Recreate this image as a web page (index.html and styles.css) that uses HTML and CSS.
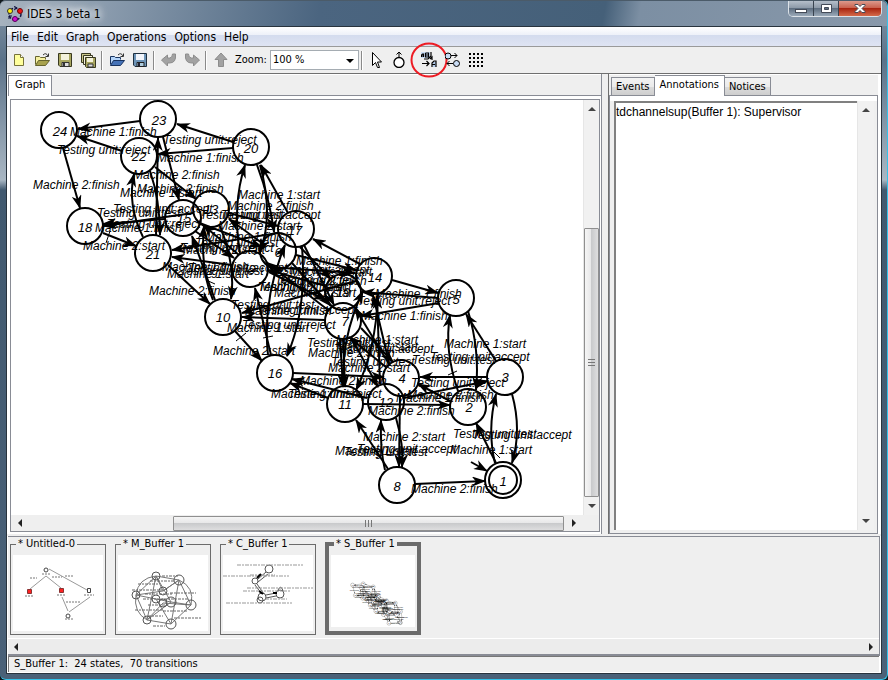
FILE: index.html
```
<!DOCTYPE html>
<html lang="en">
<head>
<meta charset="utf-8">
<title>IDES 3 beta 1</title>
<link rel="stylesheet" href="styles.css">
</head>
<body>
<div class="window">
  <header class="titlebar">
    <svg class="app-icon" viewBox="0 0 16 16" aria-hidden="true"><circle cx="8" cy="8" r="6" fill="none" stroke="#101040" stroke-width="1.5" stroke-dasharray="3 1.5"/><path d="M7 0l3 2-3 2M2 13v-3h3" fill="none" stroke="#101040"/><circle cx="3" cy="5" r="2.500" fill="#ffee10" stroke="#333"/><circle cx="13" cy="5" r="2.500" fill="#f01010" stroke="#600"/><circle cx="8" cy="13" r="2.500" fill="#d010d0" stroke="#505"/></svg>
    <h1 class="title">IDES 3 beta 1</h1>
    <div class="controls">
      <button class="ctl" aria-label="Minimize"><svg viewBox="0 0 14 12"><rect x="1.500" y="6.500" width="11" height="3" fill="#fff" stroke="#444b58"/></svg></button>
      <button class="ctl" aria-label="Maximize"><svg viewBox="0 0 14 12"><path d="M2.500 1.500h10v8h-10zM5.500 4.500h4v2h-4z" fill="#fff" fill-rule="evenodd" stroke="#444b58"/></svg></button>
      <button class="ctl close" aria-label="Close"><svg viewBox="0 0 14 12"><path d="M2 1.500h3l2 2 2-2h3v1l-3 3 3 3v1H9l-2-2-2 2H2v-1l3-3-3-3z" fill="#fff" stroke="#444b58"/></svg></button>
    </div>
  </header>

  <div class="client">
    <nav class="menubar">
      <button>File</button><button>Edit</button><button>Graph</button><button>Operations</button><button>Options</button><button>Help</button>
    </nav>

    <div class="toolbar">
      <button class="tool" aria-label="New"><svg viewBox="0 0 16 16"><path d="M3.500 2.500h6l3 3v8h-9z" fill="#ffff9c" stroke="#77723a"/><path d="M9.500 2.500v3h3" fill="#fff" stroke="#77723a"/></svg></button>
      <button class="tool" aria-label="Open"><svg viewBox="0 0 16 16"><path d="M1.500 12.500v-8h4l1 1h5v2" fill="#f6f0a0" stroke="#66642e"/><path d="M1.500 13.500l3-5h11l-4 5z" fill="#a8a24e" stroke="#66642e"/><path d="M9 3q3-3 5 1M14.500 1.500v3h-3" fill="none" stroke="#333"/></svg></button>
      <button class="tool" aria-label="Save"><svg viewBox="0 0 16 16"><path d="M1.500 1.500h13v13H3l-1.500-1.500z" fill="#a8a660" stroke="#383820"/><path d="M4 2h8v6H4z" fill="#f4f2dc"/><path d="M5 10.500h7v4H5z" fill="#ddd" stroke="#333"/><path d="M6 11h2v3H6z" fill="#333"/></svg></button>
      <button class="tool" aria-label="Save all"><svg viewBox="0 0 16 16"><path d="M1.500 1.500h9v9h-9z" fill="#c9c68a" stroke="#383820"/><path d="M3.500 3.500h9v9h-9z" fill="#f4f2dc" stroke="#383820"/><path d="M5.500 5.500h10v10h-9l-1-1z" fill="#a8a660" stroke="#383820"/><path d="M7 6h6v4H7z" fill="#f4f2dc"/><path d="M8 12h5v3H8z" fill="#ddd" stroke="#333"/></svg></button>
      <span class="sep"></span>
      <button class="tool" aria-label="Open workspace"><svg viewBox="0 0 16 16"><path d="M1.500 12.500v-8h4l1 1h5v2" fill="#b3d4fa" stroke="#19335f"/><path d="M1.500 13.500l3-5h11l-4 5z" fill="#4673b8" stroke="#19335f"/><path d="M9 3q3-3 5 1M14.500 1.500v3h-3" fill="none" stroke="#333"/></svg></button>
      <button class="tool" aria-label="Save workspace"><svg viewBox="0 0 16 16"><path d="M1.500 1.500h13v13H3l-1.500-1.500z" fill="#6d94b8" stroke="#20303f"/><path d="M4 2h8v6H4z" fill="#f2f5fb"/><path d="M5 10.500h7v4H5z" fill="#aecde0" stroke="#222"/><path d="M6 11h2v3H6z" fill="#223"/></svg></button>
      <span class="sep"></span>
      <button class="tool" aria-label="Undo"><svg viewBox="0 0 16 16"><path d="M0.500 8l6-5v3h2q3 0 3-4h3q1 9-6 9h-2v3z" fill="#a2a2a2" stroke="#8d8d8d"/></svg></button>
      <button class="tool" aria-label="Redo"><svg viewBox="0 0 16 16"><path d="M15.500 8l-6-5v3h-2q-3 0-3-4h-3q-1 9 6 9h2v3z" fill="#a2a2a2" stroke="#8d8d8d"/></svg></button>
      <span class="sep"></span>
      <button class="tool" aria-label="Up"><svg viewBox="0 0 16 16"><path d="M8 1l6 6.500h-3.500V14.500h-5V7.500H2z" fill="#a2a2a2" stroke="#8d8d8d"/></svg></button>
      <label class="zoom-label" for="zoom">Zoom:</label>
      <span class="select-box"><select id="zoom"><option>100 %</option><option>50 %</option></select></span>
      <span class="sep"></span>
      <button class="tool" aria-label="Select"><svg viewBox="0 0 16 16"><path d="M4.500 0.500v13l3-3 2 5h2l-2-5.500h4z" fill="#fff" stroke="#000"/></svg></button>
      <button class="tool" aria-label="Create state"><svg viewBox="0 0 16 16"><circle cx="8" cy="10.500" r="5" fill="#fff" stroke="#000" stroke-width="1.300"/><path d="M8 5V0M5.500 2.500L8 0l2.500 2.500" fill="none" stroke="#000"/></svg></button>
      <button class="tool marked" aria-label="Label layout"><svg viewBox="0 0 16 16"><path d="M0 0h9v6H0z" fill="#c9dcf5"/><path d="M0.500 5V3l1-1h1v3M0 4h3M4.500 1v4h3V1h-3M4.500 3h3M10 0v4l-3 3H3M9 7l2-2v3" fill="none" stroke="#000" stroke-width="1.200"/><path d="M12 10h3v5h-3z" fill="#b4cdec"/><path d="M1 11.500h7M5.500 9l2.500 2.500L5.500 14M11 15v-4l2-2h2v6M11 12.500h3" fill="none" stroke="#000" stroke-width="1.200"/></svg><svg class="ring" viewBox="0 0 38 36"><ellipse cx="19" cy="18" rx="17.500" ry="16.500" fill="none" stroke="#ed1c24" stroke-width="2"/></svg></button>
      <button class="tool" aria-label="Transitions"><svg viewBox="0 0 16 16"><circle cx="3" cy="4" r="3" fill="#c9dcf5" stroke="#000"/><circle cx="11.500" cy="11.500" r="3" fill="#c9dcf5" stroke="#000"/><path d="M6 3.500h6M9.500 1L12 3.500 9.500 6M8 11.500H2M4.500 9L2 11.500 4.500 14" fill="none" stroke="#000"/></svg></button>
      <button class="tool" aria-label="Grid"><svg viewBox="0 0 16 16"><path d="M1 2h15M1 6h15M1 10h15M1 14h15" stroke="#000" stroke-width="2" stroke-dasharray="2 2"/></svg></button>
    </div>

    <main class="work">
      <section class="graph-pane">
        <div class="tabs"><button class="tab on">Graph</button></div>
        <div class="graph-frame">
          <div class="canvas">
            <svg width="574" height="414" viewBox="11 100 574 414">
              <defs>
                <marker id="arrow" viewBox="0 0 14 10" refX="13" refY="5" markerWidth="14" markerHeight="10" markerUnits="userSpaceOnUse" orient="auto"><path d="M0 0L14 5 0 10 4 5z"/></marker>
              </defs>
              <g id="automaton">
                <g class="edges">
                  <path d="M140 121L78 129"/><path d="M122 151L77 136"/><path d="M63 148L80 208"/><path d="M233 142L177 124"/><path d="M233 148L158 154"/>
                  <path d="M155 167L196 199"/><path d="M163 137L179 200"/><path d="M143 237Q127 205 134 174"/><path d="M156 235L158 138"/><path d="M150 171Q160 200 160 235"/>
                  <path d="M103 233L136 246"/><path d="M165 219L103 224"/><path d="M193 213L103 226"/><path d="M278 233L172 250"/><path d="M232 265L172 257"/>
                  <path d="M168 265L210 304"/><path d="M215 300L192 236"/><path d="M213 300Q200 270 204 226"/><path d="M220 226Q236 265 231 299"/>
                  <path d="M240 253Q232 205 245 165"/><path d="M257 165Q270 200 274 232"/><path d="M260 165Q274 215 260 252"/><path d="M288 213L261 165"/>
                  <path d="M229 213L278 226"/><path d="M197 222L262 247"/><path d="M262 243L229 219"/><path d="M195 231L234 258"/><path d="M239 255L203 225"/>
                  <path d="M268 355Q262 300 285 245"/><path d="M271 355L255 288"/><path d="M302 247Q307 310 287 356"/><path d="M360 264L313 239"/>
                  <path d="M304 245L334 305"/><path d="M300 247L331 279"/><path d="M296 255L356 270"/><path d="M269 267L355 273"/><path d="M326 286L268 270"/>
                  <path d="M328 310L266 262"/><path d="M292 263L331 306"/><path d="M269 272L326 300"/><path d="M356 281L242 313"/><path d="M325 320L242 317"/>
                  <path d="M235 331L262 361"/><path d="M392 280L438 293"/><path d="M438 298L362 292"/><path d="M439 303L361 316"/>
                  <path d="M380 384L377 296"/><path d="M389 363L373 295"/><path d="M343 339L345 387"/><path d="M340 339L343 387"/><path d="M344 386Q340 340 363 291"/>
                  <path d="M361 328L393 362"/><path d="M389 364L355 308"/><path d="M387 368L349 337"/><path d="M351 337L378 387"/><path d="M378 294Q376 350 356 390"/>
                  <path d="M293 373L384 377"/><path d="M367 398L292 379"/><path d="M328 398L290 383"/><path d="M487 377L420 377"/><path d="M450 401L418 384"/>
                  <path d="M404 398L488 381"/><path d="M363 404L450 405"/><path d="M496 361L466 314"/><path d="M458 391Q444 350 450 315"/><path d="M468 311Q480 350 476 390"/>
                  <path d="M495 463Q487 430 496 394"/><path d="M512 394Q522 430 512 463"/><path d="M496 463L476 423"/><path d="M471 462L487 471"/>
                  <path d="M415 484L485 481"/><path d="M388 469L356 420"/><path d="M385 470Q380 450 381 420"/><path d="M396 418Q404 445 402 467"/><path d="M400 396L399 467"/>
                </g>
                <path class="ticks" d="M206 280l9 4M236 341l10-8M263 338l10-2M376 458l8-4M448 375l9-4M494 452l6 6M106 243l4-12"/>
                <g class="nodes">
                  <circle cx="59" cy="130" r="18"/><circle cx="158" cy="119" r="18"/><circle cx="139" cy="156" r="18"/><circle cx="251" cy="147" r="18"/><circle cx="85" cy="226" r="18"/><circle cx="153" cy="253" r="18"/><circle cx="183" cy="218" r="18"/><circle cx="211" cy="209" r="18"/><circle cx="296" cy="229" r="18"/><circle cx="278" cy="251" r="18"/><circle cx="250" cy="269" r="18"/><circle cx="223" cy="317" r="18"/><circle cx="275" cy="373" r="18"/><circle cx="374" cy="276" r="18"/><circle cx="343" cy="292" r="18"/><circle cx="343" cy="321" r="18"/><circle cx="456" cy="298" r="18"/><circle cx="401" cy="378" r="18"/><circle cx="386" cy="402" r="18"/><circle cx="345" cy="404" r="18"/><circle cx="468" cy="407" r="18"/><circle cx="505" cy="377" r="18"/><circle cx="397" cy="485" r="18"/><circle cx="503" cy="480" r="18"/><circle cx="503" cy="480" r="14"/>
                </g>
                <g class="names">
                  <text x="60" y="136">24</text><text x="159" y="125">23</text><text x="139" y="161">22</text><text x="251" y="153">20</text><text x="85" y="232">18</text><text x="153" y="259">21</text><text x="184" y="223">15</text><text x="211" y="214">13</text><text x="295" y="235">17</text><text x="278" y="257">6</text><text x="252" y="274">9</text><text x="223" y="322">10</text><text x="275" y="378">16</text><text x="375" y="282">14</text><text x="343" y="297">19</text><text x="345" y="326">7</text><text x="456" y="304">5</text><text x="402" y="383">4</text><text x="386" y="407">12</text><text x="345" y="409">11</text><text x="469" y="412">2</text><text x="505" y="382">3</text><text x="397" y="491">8</text><text x="503" y="486">1</text>
                </g>
                <g class="labels">
                  <text x="70" y="136">Machine 1:finish</text><text x="57" y="154">Testing unit:reject</text><text x="33" y="189">Machine 2:finish</text><text x="163" y="144">Testing unit:reject</text><text x="157" y="162">Machine 1:finish</text><text x="133" y="179">Machine 2:finish</text><text x="137" y="193">Machine 2:finish</text><text x="120" y="197">Machine 1:start</text><text x="113" y="213">Testing unit:accept</text><text x="97" y="217">Testing unit:test</text><text x="107" y="228">Testing unit:reject</text><text x="95" y="232">Machine 1:finish</text><text x="83" y="250">Machine 2:start</text>
                  <text x="238" y="199">Machine 1:start</text><text x="227" y="210">Machine 2:finish</text><text x="221" y="219">Testing unit:accept</text><text x="200" y="219">Testing unit:test</text><text x="218" y="230">Machine 2:start</text><text x="205" y="241">Machine 1:finish</text><text x="195" y="247">Testing unit:test</text><text x="180" y="252">Testing unit:reject</text><text x="183" y="254">Machine 2:start</text>
                  <text x="162" y="271">Machine 1:finish</text><text x="188" y="272">Testing unit:accept</text><text x="180" y="275">Testing unit:test</text><text x="167" y="278">Machine 1:start</text><text x="149" y="295">Machine 2:finish</text>
                  <text x="296" y="265">Machine 1:finish</text><text x="270" y="274">Testing unit:accept</text><text x="290" y="276">Machine 2:start</text><text x="275" y="284">Testing unit:test</text><text x="280" y="285">Machine 2:finish</text><text x="260" y="291">Machine 2:finish</text><text x="258" y="291">Testing unit:reject</text><text x="274" y="297">Machine 2:start</text>
                  <text x="231" y="309">Testing unit:test</text><text x="258" y="314">Testing unit:accept</text><text x="245" y="315">Machine 1:finish</text><text x="242" y="329">Testing unit:reject</text><text x="227" y="332">Machine 1:start</text><text x="213" y="355">Machine 2:start</text>
                  <text x="375" y="298">Machine 1:finish</text><text x="357" y="305">Testing unit:reject</text><text x="361" y="320">Machine 1:finish</text><text x="336" y="344">Machine 1:start</text><text x="307" y="347">Testing unit:test</text><text x="334" y="353">Testing unit:accept</text><text x="336" y="351">Machine 1:start</text><text x="308" y="357">Machine 2:finish</text><text x="331" y="366">Testing unit:test</text><text x="328" y="372">Machine 2:start</text><text x="300" y="385">Machine 2:finish</text><text x="271" y="398">Machine 1:finish</text><text x="288" y="398">Testing unit:reject</text>
                  <text x="444" y="348">Machine 1:start</text><text x="412" y="364">Testing unit:test</text><text x="430" y="361">Testing unit:accept</text><text x="411" y="387">Testing unit:reject</text><text x="407" y="399">Machine 2:finish</text><text x="396" y="402">Machine 1:finish</text><text x="368" y="415">Machine 2:finish</text><text x="363" y="441">Machine 2:start</text><text x="335" y="455">Machine 1:start</text><text x="357" y="453">Testing unit:accept</text><text x="344" y="456">Testing unit:test</text><text x="453" y="438">Testing unit:test</text><text x="472" y="439">Testing unit:accept</text><text x="450" y="454">Machine 1:start</text><text x="411" y="493">Machine 2:finish</text>
                </g>
              </g>
            </svg>
          </div>
          <div class="vscroll"><i class="arr up"></i><span class="vthumb"></span><i class="arr down"></i></div>
          <div class="hscroll"><i class="arr left"></i><span class="hthumb"></span><i class="arr right"></i></div>
        </div>
      </section>

      <section class="side-pane">
        <div class="tabs"><button class="tab">Events</button><button class="tab on">Annotations</button><button class="tab">Notices</button></div>
        <div class="note-frame">
          <textarea class="notes" aria-label="Annotations" spellcheck="false">tdchannelsup(Buffer 1): Supervisor</textarea>
          <div class="note-scroll"><i class="arr up"></i><i class="arr down"></i></div>
        </div>
      </section>
    </main>

    <section class="filmstrip">
      <div class="thumbs">
        <fieldset class="thumb"><legend>* Untitled-0</legend>
          <svg viewBox="0 0 90 76"><g fill="none" stroke="#999"><path d="M33 21L17 34M33 21L48 33M36 14L74 35M49 42L55 56M77 42L56 57"/><circle cx="33" cy="15" r="2" stroke="#444"/><circle cx="55" cy="61" r="2" stroke="#444"/><path d="M74.500 33.500h3v4h-3z" stroke="#444"/></g><path d="M14.500 34.500h4v4h-4zM46.500 33.500h4v4h-4z" fill="#f22" stroke="#833"/><path d="M17 23h7M39 22h10M52 21h9M29 19h8M12 41h9M44 40h9M71 40h10M53 47h14M52 64h8" stroke="#777" stroke-dasharray="2 1"/></svg>
        </fieldset>
        <fieldset class="thumb"><legend>* M_Buffer 1</legend>
          <svg viewBox="0 0 90 76"><g fill="none" stroke="#777"><path d="M38 21L61 25 73 50 53 69 29 65 18 40zM38 21L45 36 61 25M38 21L53 47 73 50M18 40L38 44 53 47 29 65M18 40L45 36 61 25 53 69M29 65L45 48 73 50M38 44L53 69M18 40Q20 23 38 21M73 50Q77 32 61 25M38 21L29 65M29 65Q15 57 18 40"/><g stroke="#555"><circle cx="38" cy="21" r="4"/><circle cx="61" cy="25" r="5"/><circle cx="73" cy="50" r="5"/><circle cx="53" cy="69" r="5"/><circle cx="29" cy="65" r="4"/><circle cx="18" cy="40" r="4"/><circle cx="45" cy="36" r="4"/><circle cx="38" cy="44" r="4"/><circle cx="53" cy="47" r="5"/><circle cx="45" cy="48" r="4"/></g></g><path d="M20 29h20M44 21h16M52 38h26M14 35h30M25 44h46M17 55h28M45 56h24M30 61h15M56 63h27M27 39h27M32 26h24M30 50h20M35 71h12" stroke="#666" stroke-dasharray="3 1 2 1"/></svg>
        </fieldset>
        <fieldset class="thumb"><legend>* C_Buffer 1</legend>
          <svg viewBox="0 0 90 76"><g fill="none" stroke="#555"><circle cx="46" cy="14" r="4"/><circle cx="32" cy="26" r="3"/><circle cx="39" cy="42" r="4"/><circle cx="57" cy="39" r="4"/><circle cx="37" cy="45" r="3"/><path d="M43 17L35 24M45 19L35 27M32 30L38 38M34 29L41 39M43 40L53 38M43 43L53 41M55 35q3-6 5 1"/></g><path d="M14 10h66M0 21h66M27 20h25M24 33h66M20 36h48M42 44h22M3 48h66" stroke="#999" stroke-dasharray="4 1 2 1"/><path d="M34 23l4-4M36 36l4 3M50 38h4" stroke="#000" stroke-width="2"/></svg>
        </fieldset>
        <fieldset class="thumb current"><legend>* S_Buffer 1</legend>
          <svg viewBox="0 0 780 655"><use href="#automaton" x="141" y="142"/></svg>
        </fieldset>
      </div>
      <div class="strip-scroll"><i class="arr left"></i><i class="arr right"></i></div>
    </section>

    <footer class="status">S_Buffer 1:&nbsp; 24 states,&nbsp; 70 transitions</footer>
  </div>
</div>
</body>
</html>
```
FILE: styles.css
```
* { box-sizing: border-box; }

body {
  margin: 0;
  background: #10181c;
  color: #000;
  font: 11px/14px "DejaVu Sans Condensed", "DejaVu Sans", sans-serif;
}

button, select, textarea { font: inherit; color: inherit; margin: 0; border: 0; padding: 0; background: none; }
svg { display: block; }

.window {
  display: flex;
  flex-direction: column;
  height: 100vh;
  padding: 0 5px 5px 6px;
  border: solid #33c3ea;
  border-width: 0 1px 1px 0;
  border-radius: 6px;
  background: linear-gradient(#8496a8, #5b7289 60px, #a9b7c3 180px, #41596f 190px, #4a6178);
}

.titlebar {
  display: flex;
  align-items: center;
  height: 26px;
  margin: 0 -5px 0 -6px;
  padding: 0 5px 0 7px;
  border-top: 1px solid #4b5b69;
  border-radius: 6px 6px 0 0;
  background: linear-gradient(100deg, #a7b3bf, #8a9bad 12%, #4b6580 36%, #456079 68%, #7c8fa3 72%, #8898aa);
}

.app-icon { width: 16px; height: 16px; }

.title {
  margin: 0 0 0 4px;
  font: 12px/16px "DejaVu Sans Condensed", "DejaVu Sans", sans-serif;
  text-shadow: 0 0 6px #fff, 0 0 8px #fff, 0 0 12px #fff;
}

.controls {
  display: flex;
  align-self: flex-start;
  margin-left: auto;
  height: 16px;
  border: 1px solid #dce2e8;
  border-top: 0;
  border-radius: 0 0 5px 5px;
  overflow: hidden;
}

.ctl {
  display: grid;
  place-items: center;
  width: 25px;
  border-right: 1px solid #39434f;
  background: linear-gradient(#b5bfca, #8996a5 50%, #5f6f81 50%, #9aa9b8);
}

.ctl svg { width: 14px; height: 12px; }

.ctl.close {
  width: 42px;
  border: 0;
  background: linear-gradient(#dc9a8c, #c75c48 50%, #a92510 50%, #d46a4a);
}

.client {
  flex: 1;
  min-height: 0;
  display: flex;
  flex-direction: column;
  border: 1px solid #28333d;
  background: #fff;
}

.menubar {
  display: flex;
  gap: 8px;
  height: 20px;
  padding: 0 4px;
  border-bottom: 1px solid #9a9a9a;
  background: linear-gradient(#fff, #eef1f9 40%, #d3dbee 40%, #dfe4f3);
  font-size: 12px;
}

.toolbar {
  display: flex;
  align-items: center;
  height: 27px;
  background: #efefef;
  border-bottom: 1px solid #6f6f6f;
}

.tool { position: relative; display: grid; place-items: center; width: 23px; height: 24px; }
.tool svg { width: 16px; height: 16px; }
.marked { margin: 0 1px 0 7px; }

.tool .ring {
  position: absolute;
  left: -8px;
  top: -6px;
  width: 38px;
  height: 36px;
}

.sep { width: 2px; height: 19px; margin: 0 2px; background: linear-gradient(90deg, #8a8a8a 50%, #fff 50%); }
.zoom-label { margin: 0 3px; }
.select-box { position: relative; width: 89px; height: 20px; }

.select-box select {
  width: 100%;
  height: 100%;
  padding: 0 2px;
  border: 1px solid #a5acb2;
  background: #fff;
  appearance: none;
}

.select-box::after {
  content: "";
  position: absolute;
  right: 5px;
  top: 9px;
  border: solid transparent;
  border-width: 4px 4px 0;
  border-top-color: #000;
  pointer-events: none;
}

.work { flex: 1; min-height: 0; display: flex; gap: 6px; padding-bottom: 2px; background: #efefef; }

.graph-pane, .side-pane { display: flex; flex-direction: column; padding-top: 1px; background: #fff; }
.graph-pane { flex: 1; min-width: 0; padding-left: 1px; border-right: 1px solid #898c95; }
.side-pane { width: 32%; max-width: 273px; padding-right: 3px; border-left: 1px solid #6f6f6f; }

.tabs {
  display: flex;
  align-items: flex-end;
  height: 21px;
  background: #efefef;
  border-bottom: 1px solid #898c95;
}

.side-pane .tabs { padding-left: 2px; }

.tab {
  height: 18px;
  padding: 0 4px;
  border: 1px solid #898c95;
  border-bottom: 0;
  background: linear-gradient(#f3f3f3, #ebebeb 50%, #dcdcdc 50%, #cecece);
}

.tab + .tab, .tab.on + .tab { border-left: 0; }
.tab.on { height: 21px; margin-bottom: -1px; padding: 0 6px 2px; background: #fff; }
.side-pane .tab.on { padding: 0 5px 2px; }

.graph-frame {
  flex: 1;
  min-height: 0;
  display: grid;
  grid-template: minmax(0, 1fr) 16px / minmax(0, 1fr) 16px;
  margin: 3px 1px 2px 2px;
  border: 1px solid #898c95;
  background: #efefef;
}

.canvas { overflow: hidden; background: #fff; }

.edges path { fill: none; stroke: #000; stroke-width: 2; marker-end: url(#arrow); }
.ticks { fill: none; stroke: #000; }
.nodes circle { fill: none; stroke: #000; stroke-width: 2; }
.names, .labels { font: italic 12px "Liberation Sans", sans-serif; }
.names { font-size: 13px; text-anchor: middle; }

.vscroll, .note-scroll { display: flex; flex-direction: column; align-items: center; justify-content: space-between; padding: 7px 0; background: #f1f1f1; border-left: 1px solid #e6e6e6; }
.hscroll { display: flex; align-items: center; justify-content: space-between; padding: 0 7px; }

.vthumb, .hthumb { border: 1px solid #8f8f8f; border-radius: 1px; }

.vthumb {
  width: 15px;
  height: 67%;
  margin: auto 0 7px;
  background:
    linear-gradient(#777 1px, transparent 1px 3px, #777 3px 4px, transparent 4px 6px, #777 6px 7px) center / 7px 7px no-repeat,
    linear-gradient(90deg, #f5f5f5, #e6e6e7 50%, #c9cacc 50%, #dededf);
}

.hthumb {
  width: 70%;
  height: 15px;
  margin: 0 8px 0 auto;
  background:
    linear-gradient(90deg, #777 1px, transparent 1px 3px, #777 3px 4px, transparent 4px 6px, #777 6px 7px) center / 7px 7px no-repeat,
    linear-gradient(#f5f5f5, #e6e6e7 50%, #c9cacc 50%, #dededf);
}

.arr { flex: none; border: 4px solid transparent; }
.arr.up { border-top: 0; border-bottom-color: #444; }
.arr.down { border-bottom: 0; border-top-color: #444; }
.arr.left { border-left: 0; border-right-color: #222; }
.arr.right { border-right: 0; border-left-color: #222; }

.note-frame {
  flex: 1;
  min-height: 0;
  display: flex;
  padding: 5px 3px 3px 4px;
  border: 1px solid #898c95;
  border-top: 0;
  background: linear-gradient(#fff 5px, #efefef 5px);
}

.notes {
  flex: 1;
  min-width: 0;
  height: 100%;
  padding: 2px 0;
  border: solid #808080;
  border-width: 2px 0 0 2px;
  background: #fff;
  font: 12px/15px "Liberation Sans", sans-serif;
  resize: none;
  outline: 0;
}

.note-scroll { width: 17px; }

.filmstrip {
  flex: none;
  margin: 0 1px;
  border: solid #898c95;
  border-width: 1px 1px 2px 0;
  background: #efefef;
}

.thumbs { display: flex; gap: 9px; padding: 0 2px; height: 101px; }

.thumb {
  width: 96px;
  height: 98px;
  min-width: 0;
  margin: 0;
  padding: 4px 2px 2px;
  border: 1px solid #6b6b6b;
}

.thumb legend { padding: 0 2px; margin-left: 3px; line-height: 14px; }
.thumb svg { width: 100%; height: 76px; background: #fff; }
.thumb.current { padding: 4px 2px 1px; border-width: 4px; }
.thumb.current svg { height: 72px; }

.strip-scroll { display: flex; align-items: center; justify-content: space-between; height: 16px; padding: 0 6px; border-top: 1px solid #fff; background: #ececec; }

.status {
  flex: none;
  height: 16px;
  margin: 0 2px 1px 1px;
  padding: 0 5px;
  border: solid #777;
  border-width: 1px 0 0 1px;
  background: #efefef;
}
```
